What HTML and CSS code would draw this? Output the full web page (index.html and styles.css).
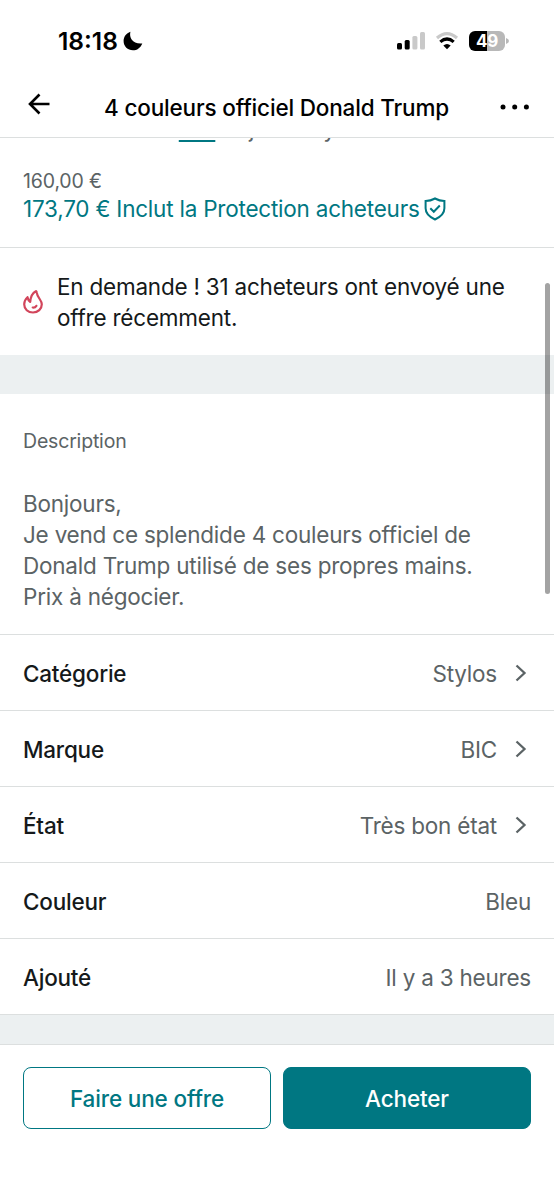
FILE: index.html
```html
<!DOCTYPE html>
<html lang="fr">
<head>
<meta charset="utf-8">
<title>4 couleurs officiel Donald Trump</title>
<link rel="stylesheet" href="styles.css">
</head>
<body>
<div class="screen">
  <div class="status">
    <span class="clock">18:18</span>
    <svg class="moon" width="20" height="20" viewBox="0 0 20 20"><path d="M7.400.8C6 6.900 9.500 13.200 19.300 12.400 17.600 16.800 14 19.300 9.900 19.300 4.700 19.300.6 15.300.6 10 .6 5.800 3.300 2.200 7.400.8Z"/></svg>
    <svg class="signal" width="28" height="18" viewBox="0 0 28 18"><rect x="0" y="11" width="5" height="6.500" rx="1.500"/><rect x="7.700" y="8" width="5" height="9.500" rx="1.500"/><g fill="#c9c9c9"><rect x="15.400" y="4" width="5" height="13.500" rx="1.500"/><rect x="23" y="0" width="5" height="17.500" rx="1.500"/></g></svg>
    <svg class="wifi" width="24" height="18" viewBox="0 0 24 18"><path d="M2 6Q12-2.600 22 6" fill="none" stroke="#c9c9c9" stroke-width="3.200"/><path d="M5.300 9.900Q12 4.100 18.700 9.900" fill="none" stroke="#000" stroke-width="3.200"/><path d="M8.300 13.500Q12 10.500 15.700 13.500L12 17.300Z"/></svg>
    <div class="battery"><span>49</span></div>
    <svg class="nub" width="3" height="6" viewBox="0 0 3 6"><path d="M0 0Q3 1 3 3T0 6Z" fill="#b8b8b8"/></svg>
  </div>
  <div class="header">
    <svg class="back" width="22" height="22" viewBox="0 0 22 22"><path d="M11.500 1.500 2 11l9.500 9.500M2 11h19.500"/></svg>
    <h1>4 couleurs officiel Donald Trump</h1>
    <svg class="more" width="30" height="6" viewBox="0 0 30 6"><circle cx="3" cy="3" r="2.500"/><circle cx="14.700" cy="3" r="2.500"/><circle cx="26.400" cy="3" r="2.500"/></svg>
  </div>
  <div class="summary">
    <div class="crumbs"><div class="crumbs-text">Très bon état · <a>BIC</a> · Ajouté il y a 3 heures</div></div>
    <div class="price">160,00 €</div>
    <div class="total"><span>173,70 € Inclut la Protection acheteurs</span>
      <svg width="22" height="24" viewBox="0 0 22 24"><path d="M11 1.500C8.200 3 5 3.900 1.600 4v7.300c0 5 3.800 8.700 9.400 11.200 5.600-2.500 9.400-6.200 9.400-11.200V4C17 3.900 13.800 3 11 1.500Z"/><path d="m6.300 11.200 3.500 3.500 6-6.200"/></svg>
    </div>
  </div>
  <div class="notice">
    <svg width="20" height="24" viewBox="0 0 20 24"><path d="M12.800 1.300C9.500 3 7.700 6.500 7.200 12 5.800 10.800 4.900 9.200 4.500 7.200 2.500 9 1.200 11.600 1.200 14.300c0 4.800 3.800 8.200 8.800 8.200s8.800-3.600 8.800-8.200c0-4.400-4.500-6.500-5.200-12.100Q13.500 1 12.800 1.300Z"/><path d="M9.700 17.500c1.600.2 2.900-.4 3.700-1.700"/></svg>
    <p>En demande ! 31 acheteurs ont envoyé une offre récemment.</p>
  </div>
  <div class="band"></div>
  <div class="description">
    <h2>Description</h2>
    <p>Bonjours,<br>Je vend ce splendide 4 couleurs officiel de<br>Donald Trump utilisé de ses propres mains.<br>Prix à négocier.</p>
  </div>
  <div class="row"><b>Catégorie</b><span>Stylos</span><svg width="12" height="18" viewBox="0 0 12 18"><path d="m1.500 1.500 8 7.500-8 7.500"/></svg></div>
  <div class="row"><b>Marque</b><span>BIC</span><svg width="12" height="18" viewBox="0 0 12 18"><path d="m1.500 1.500 8 7.500-8 7.500"/></svg></div>
  <div class="row"><b>État</b><span>Très bon état</span><svg width="12" height="18" viewBox="0 0 12 18"><path d="m1.500 1.500 8 7.500-8 7.500"/></svg></div>
  <div class="row"><b>Couleur</b><span>Bleu</span></div>
  <div class="row"><b>Ajouté</b><span>Il y a 3 heures</span></div>
  <div class="band band-end"></div>
  <div class="actions">
    <button class="offer">Faire une offre</button>
    <button class="buy">Acheter</button>
  </div>
  <div class="scrollbar"></div>
</div>
</body>
</html>
```
FILE: styles.css
```css
* { box-sizing: border-box; }
body { margin: 0; background: #fff; font-family: Inter, "Liberation Sans", sans-serif; font-size: 22.5px; font-weight: 400; letter-spacing: -0.22px; color: #15191a; }
h1, h2, p { margin: 0; font-weight: inherit; }
svg { display: block; flex: none; }
.screen { position: relative; width: 554px; height: 1200px; overflow: hidden; display: flex; flex-direction: column; }
.screen > div { flex: none; }
.status { height: 78px; display: flex; align-items: center; padding: 4px 0 0 58px; color: #000; }
.clock { width: 61px; font-size: 24.5px; font-weight: 600; letter-spacing: 0; white-space: nowrap; }
.moon { margin-left: 4px; }
.signal { margin-left: 254px; }
.wifi { margin-left: 10px; }
.battery { width: 36px; height: 20px; margin-left: 10px; border-radius: 6px; background: linear-gradient(90deg, #000 50%, #b8b8b8 50%); color: #fff; display: flex; align-items: center; justify-content: center; }
.battery span { font-size: 17px; line-height: 20px; font-weight: 700; }
.nub { margin-left: 1px; }
.header { height: 60px; display: flex; align-items: center; padding: 0 24px 0 28px; border-bottom: 1px solid #dcdfdf; color: #000; }
.back { fill: none; stroke: #000; stroke-width: 2.6; margin-top: -8px; }
.more { margin-top: -2px; }
.header h1 { flex: 1; padding-left: 3px; text-align: center; font-size: 22.5px; font-weight: 500; letter-spacing: -0.17px; white-space: nowrap; }
.summary { height: 110px; padding: 0 23px; border-bottom: 1px solid #dcdfdf; color: #5b6365; }
.crumbs { height: 28px; overflow: hidden; }
.crumbs-text { margin-top: -25px; line-height: 31px; white-space: nowrap; }
.crumbs a { color: #007782; text-decoration: underline; text-decoration-thickness: 2px; text-underline-offset: 3px; }
.price { font-size: 19.5px; line-height: 30px; letter-spacing: -0.15px; }
.total { display: flex; align-items: center; gap: 4px; height: 25px; color: #007782; white-space: nowrap; }
.total svg { fill: none; stroke: #007782; stroke-width: 2; }
.notice { height: 107px; display: flex; align-items: center; gap: 14px; padding: 0 23px; line-height: 31px; }
.notice svg { fill: none; stroke: #d2455b; stroke-width: 2.2; stroke-linecap: round; stroke-linejoin: round; }
.band { height: 39px; background: #ecf0f1; }
.description { height: 241px; padding: 32px 23px 0; border-bottom: 1px solid #dcdfdf; color: #5b6365; line-height: 31px; white-space: nowrap; }
.description h2 { font-size: 19.5px; line-height: 31px; margin-bottom: 31px; letter-spacing: -0.18px; }
.row { height: 76px; display: flex; align-items: center; padding: 1px 23px 0; border-bottom: 1px solid #dcdfdf; }
.row b { flex: 1; font-weight: 500; }
.row span { color: #5b6365; }
.row svg { margin: 0 4px 0 18px; fill: none; stroke: #5b6365; stroke-width: 2.3; }
.band-end { height: 30px; border-bottom: 1px solid #dcdfdf; }
.actions { display: grid; grid-template-columns: 1fr 1fr; gap: 12px; padding: 22px 23px 0; }
.actions button { height: 62px; padding: 0; border: 1px solid #007782; border-radius: 8px; font: 500 22.5px Inter, sans-serif; letter-spacing: -0.15px; }
.offer { background: #fff; color: #007782; }
.buy { background: #007782; color: #fff; }
.scrollbar { position: absolute; left: 545px; top: 283px; width: 5px; height: 311px; border-radius: 3px; background: rgba(0, 0, 0, .36); }
```
